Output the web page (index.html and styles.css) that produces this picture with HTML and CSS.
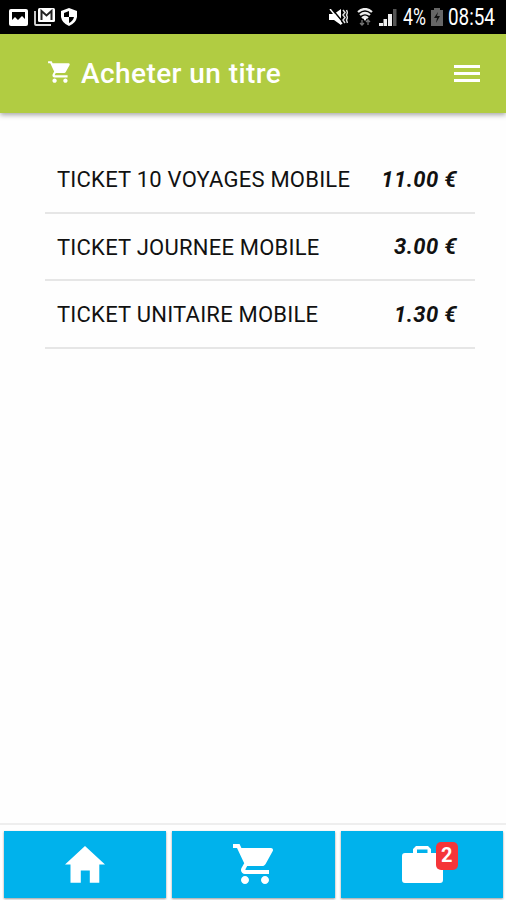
FILE: index.html
```html
<!DOCTYPE html>
<html lang="fr">
<head>
<meta charset="utf-8">
<title>Acheter un titre</title>
<link rel="stylesheet" href="styles.css">
</head>
<body>
<div class="status">
  <div class="status-left">
    <svg width="19" height="17" viewBox="0 0 19 17"><rect width="19" height="17" rx="2" fill="#fff"/><path d="M3 3h13v7l-3-3-4 4-3-3-3 3z" fill="#000"/></svg>
    <svg width="21" height="18" viewBox="0 0 21 18"><path d="M1 3v13q0 1 1 1h15" fill="none" stroke="#ddd" stroke-width="1.8"/><rect x="4" width="17" height="14" rx="1.500" fill="#fff"/><path d="M7.500 12V3l5 4.500 5-4.500v9" fill="none" stroke="#222" stroke-width="2"/></svg>
    <svg width="16" height="18" viewBox="0 0 16 18"><path d="M8 0l8 3v6q-1 6-8 9-7-3-8-9V3z" fill="#fff"/><path d="M8 3v6H3V5zM8 9h5q-1 4-5 6z" fill="#000"/></svg>
  </div>
  <div class="status-right">
    <svg width="19" height="17" viewBox="0 0 19 17"><path d="M0 5h5l7-5v16l-7-5H0z" fill="#fff"/><path d="M3 0l10 12" stroke="#000" stroke-width="1.500"/><path d="M1 0l12 15" stroke="#fff" stroke-width="1.500"/><path d="M14 1l2 2.500L14 6l2 2.500-2 2.500 2 3M17.500 1l1 2.500-1 2.500 1 2.500-1 2.500 1 3" fill="none" stroke="#ddd" stroke-width="1.500"/></svg>
    <svg class="wifi" width="16" height="18" viewBox="0 0 16 18"><path d="M1 4q7-6 14 0M3 7q5-4 10 0M5 10q3-2.500 6 0" fill="none" stroke="#eee" stroke-width="2.200"/><path d="M6 10h4l-2 3z" fill="#fff"/><path d="M5 12v5M3 15l2 2 2-2M11 17v-5M9 14l2-2 2 2" fill="none" stroke="#777" stroke-width="1.300"/></svg>
    <svg class="signal" width="18" height="17" viewBox="0 0 18 17"><path d="M0 17v-3h4v3zM4.500 17v-7H8v7zM9 17V5h4v12z" fill="#eee"/><path d="M14 17V0h3.500v17z" fill="#555"/></svg>
    <span class="pct"><span>4%</span></span>
    <svg class="battery" width="12" height="18" viewBox="0 0 12 18"><path d="M3 0h6v2h3v16H0V2h3z" fill="#666"/><path d="M7 4l-4 6h3l-1 5 4-7H6z" fill="#111"/></svg>
    <span class="clock"><span>08:54</span></span>
  </div>
</div>
<header class="bar">
  <svg class="bar-cart" width="26" height="26" viewBox="0 0 24 24"><path d="M7 18c-1.100 0-2 .9-2 2s.9 2 2 2 2-.9 2-2-.9-2-2-2zM1 2v2h2l3.600 7.590-1.350 2.450C4.500 15.400 5.500 17 7 17h12v-2H7.420c-.14 0-.25-.11-.25-.25l.03-.12.9-1.630h7.450c.75 0 1.410-.41 1.750-1.030l3.580-6.490C21.250 4.820 20.760 4 20 4H5.210l-.94-2zM17 18c-1.100 0-2 .9-2 2s.9 2 2 2 2-.9 2-2-.9-2-2-2z"/></svg>
  <h1>Acheter un titre</h1>
  <div class="menu"><i></i><i></i><i></i></div>
</header>
<main>
  <ul class="list">
    <li><span class="name">TICKET 10 VOYAGES MOBILE</span><span class="price">11.00 €</span></li>
    <li><span class="name">TICKET JOURNEE MOBILE</span><span class="price">3.00 €</span></li>
    <li><span class="name">TICKET UNITAIRE MOBILE</span><span class="price">1.30 €</span></li>
  </ul>
</main>
<nav class="tabs">
  <a><svg width="40" height="48" viewBox="0 0 40 48"><path d="M20 6l20 18.500h-5.700v18.200h-9.500V30.500h-9v12.200H5.500V24.500H0z"/></svg></a>
  <a><svg class="tab-cart" width="48" height="48" viewBox="0 0 24 24"><path d="M7 18c-1.100 0-2 .9-2 2s.9 2 2 2 2-.9 2-2-.9-2-2-2zM1 2v2h2l3.600 7.590-1.350 2.450C4.500 15.400 5.500 17 7 17h12v-2H7.420c-.14 0-.25-.11-.25-.25l.03-.12.9-1.630h7.450c.75 0 1.410-.41 1.750-1.030l3.580-6.490C21.250 4.820 20.760 4 20 4H5.210l-.94-2zM17 18c-1.100 0-2 .9-2 2s.9 2 2 2 2-.9 2-2-.9-2-2-2z"/></svg></a>
  <a><span class="bag"><svg width="41" height="48" viewBox="0 0 41 48"><path fill-rule="evenodd" d="M3 13h8V9l3-3h12l3 3v4h9q3 0 3 3v24q0 3-3 3H3q-3 0-3-3V16q0-3 3-3zM15 9.500V13h10.500V9.500z"/></svg><b class="badge">2</b></span></a>
</nav>
</body>
</html>
```
FILE: styles.css
```css
* { box-sizing: border-box; }
body {
  margin: 0;
  height: 900px;
  display: flex;
  flex-direction: column;
  overflow: hidden;
  background: #fefefe;
  color: #111;
  font-family: Roboto, sans-serif;
}
svg { display: block; flex: none; }
.status {
  height: 34px;
  flex: none;
  display: flex;
  justify-content: space-between;
  align-items: center;
  padding: 0 10px 0 9px;
  background: #000;
  color: #fff;
}
.status-left { display: flex; align-items: center; gap: 6px; }
.status-right { display: flex; align-items: center; }
.wifi { margin-left: 9px; }
.signal { margin-left: 6px; }
.pct, .clock { font-size: 23px; line-height: 34px; white-space: nowrap; padding-top: 2px; }
.pct span, .clock span { display: inline-block; transform: scaleX(.82); transform-origin: left; }
.pct { width: 24px; margin-left: 6px; }
.pct span { transform: scaleX(.77); }
.battery { margin-left: 4px; }
.clock { width: 48px; margin-left: 5px; }
.bar {
  height: 79px;
  flex: none;
  display: flex;
  align-items: center;
  padding: 0 26px 0 47px;
  background: #b1cc42;
  box-shadow: 0 2px 5px rgba(0, 0, 0, .35);
  color: #fff;
}
.bar-cart { fill: #fff; margin-top: -4px; }
h1 { margin: 0 0 0 8px; font-size: 28px; font-weight: 500; line-height: 36px; letter-spacing: .42px; }
.menu { margin-left: auto; width: 26px; display: grid; gap: 4px; }
.menu i { height: 3px; background: #fff; }
main { flex: 1; padding: 33px 31px 0 45px; }
.list { list-style: none; margin: 0; padding: 0; }
.list li {
  height: 67.500px;
  display: flex;
  align-items: center;
  justify-content: space-between;
  padding: 3px 18px 0 12px;
  border-bottom: 2px solid #e6e6e6;
}
.name, .price { font-size: 22px; line-height: 28px; white-space: nowrap; }
.name { letter-spacing: .23px; }
.price { font-weight: 700; font-style: italic; letter-spacing: .4px; margin-top: -1px; }
.tabs {
  height: 77px;
  flex: none;
  display: grid;
  grid-template-columns: repeat(3, 1fr);
  gap: 6px;
  padding: 6px 3px 2px 4px;
  border-top: 2px solid #eee;
}
.tabs a {
  display: flex;
  align-items: center;
  justify-content: center;
  padding-bottom: 2px;
  background: #00b2ec;
  box-shadow: 0 1px 2px rgba(0, 0, 0, .4);
}
.tabs svg { fill: #fff; }
.tab-cart { margin-left: 3px; }
.bag { position: relative; margin-left: 1px; }
.badge {
  position: absolute;
  left: 34px;
  top: 2px;
  width: 22px;
  height: 28px;
  border-radius: 5px;
  background: #f53539;
  color: #fff;
  font-size: 20px;
  line-height: 27px;
  text-align: center;
}
```
